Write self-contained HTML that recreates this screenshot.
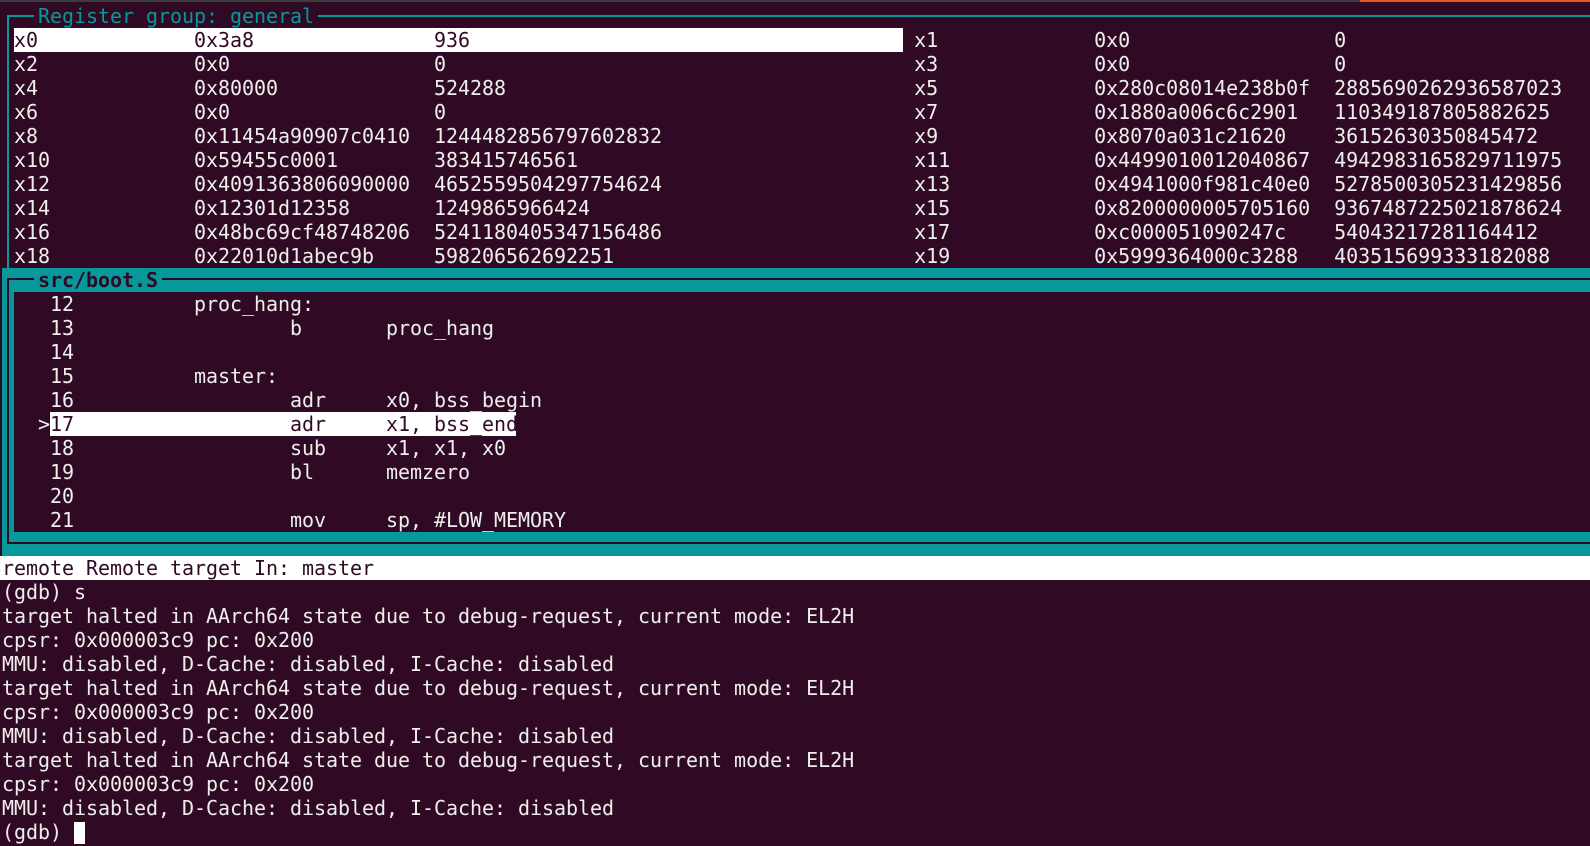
<!DOCTYPE html>
<html><head><meta charset="utf-8"><style>
html,body{margin:0;padding:0;}
body{width:1590px;height:846px;background:#300a24;position:relative;overflow:hidden;font-family:"DejaVu Sans Mono","Liberation Mono",monospace;font-size:20px;letter-spacing:-0.04px;color:#eeeeec;}
div,span{position:absolute;}
.r{height:24px;line-height:24px;white-space:pre;left:2px;}
</style></head><body>
<div style="left:0;top:0;width:1360px;height:2px;background:#3c3c3c"></div>
<div style="left:1360px;top:0;width:230px;height:2px;background:#e95420"></div>
<div style="left:7px;top:15px;width:1583px;height:2px;background:#06989a"></div>
<div style="left:7px;top:15px;width:2px;height:253px;background:#06989a"></div>
<div style="left:34px;top:4px;height:24px;line-height:24px;background:#300a24;color:#06989a;white-space:pre;padding:0 4px">Register group: general</div>
<div style="left:14px;top:28px;width:889px;height:24px;background:#ffffff"></div>
<div class="r" style="top:28px;color:#300a24"> x0             0x3a8               936</div>
<div class="r" style="top:28px">                                                                            x1             0x0                 0</div>
<div class="r" style="top:52px"> x2             0x0                 0                                       x3             0x0                 0</div>
<div class="r" style="top:76px"> x4             0x80000             524288                                  x5             0x280c08014e238b0f  2885690262936587023</div>
<div class="r" style="top:100px"> x6             0x0                 0                                       x7             0x1880a006c6c2901   110349187805882625</div>
<div class="r" style="top:124px"> x8             0x11454a90907c0410  1244482856797602832                     x9             0x8070a031c21620    36152630350845472</div>
<div class="r" style="top:148px"> x10            0x59455c0001        383415746561                            x11            0x4499010012040867  4942983165829711975</div>
<div class="r" style="top:172px"> x12            0x4091363806090000  4652559504297754624                     x13            0x4941000f981c40e0  5278500305231429856</div>
<div class="r" style="top:196px"> x14            0x12301d12358       1249865966424                           x15            0x8200000005705160  9367487225021878624</div>
<div class="r" style="top:220px"> x16            0x48bc69cf48748206  5241180405347156486                     x17            0xc000051090247c    54043217281164412</div>
<div class="r" style="top:244px"> x18            0x22010d1abec9b     598206562692251                         x19            0x5999364000c3288   403515699333182088</div>
<div style="left:2px;top:268px;width:1588px;height:288px;background:#06989a"></div>
<div style="left:7px;top:278px;width:1583px;height:2px;background:#300a24"></div>
<div style="left:7px;top:278px;width:2px;height:266px;background:#300a24"></div>
<div style="left:7px;top:542px;width:1583px;height:2px;background:#300a24"></div>
<div style="left:14px;top:292px;width:1576px;height:240px;background:#300a24"></div>
<div style="left:34px;top:268px;height:24px;line-height:24px;background:#06989a;color:#300a24;font-weight:bold;white-space:pre;padding:0 4px">src/boot.S</div>
<div class="r" style="top:292px">    12          proc_hang:</div>
<div class="r" style="top:316px">    13                  b       proc_hang</div>
<div class="r" style="top:340px">    14</div>
<div class="r" style="top:364px">    15          master:</div>
<div class="r" style="top:388px">    16                  adr     x0, bss_begin</div>
<div style="left:50px;top:412px;width:466px;height:24px;background:#ffffff"></div>
<div class="r" style="top:412px">   &gt;</div>
<div class="r" style="top:412px;color:#300a24">    17                  adr     x1, bss_end</div>
<div class="r" style="top:436px">    18                  sub     x1, x1, x0</div>
<div class="r" style="top:460px">    19                  bl      memzero</div>
<div class="r" style="top:484px">    20</div>
<div class="r" style="top:508px">    21                  mov     sp, #LOW_MEMORY</div>
<div style="left:0;top:556px;width:1590px;height:24px;background:#ffffff"></div>
<div class="r" style="top:556px;color:#300a24">remote Remote target In: master</div>
<div class="r" style="top:580px">(gdb) s</div>
<div class="r" style="top:604px">target halted in AArch64 state due to debug-request, current mode: EL2H</div>
<div class="r" style="top:628px">cpsr: 0x000003c9 pc: 0x200</div>
<div class="r" style="top:652px">MMU: disabled, D-Cache: disabled, I-Cache: disabled</div>
<div class="r" style="top:676px">target halted in AArch64 state due to debug-request, current mode: EL2H</div>
<div class="r" style="top:700px">cpsr: 0x000003c9 pc: 0x200</div>
<div class="r" style="top:724px">MMU: disabled, D-Cache: disabled, I-Cache: disabled</div>
<div class="r" style="top:748px">target halted in AArch64 state due to debug-request, current mode: EL2H</div>
<div class="r" style="top:772px">cpsr: 0x000003c9 pc: 0x200</div>
<div class="r" style="top:796px">MMU: disabled, D-Cache: disabled, I-Cache: disabled</div>
<div class="r" style="top:820px">(gdb) </div>
<div style="left:74px;top:822px;width:11px;height:22px;background:#ffffff"></div>
</body></html>
